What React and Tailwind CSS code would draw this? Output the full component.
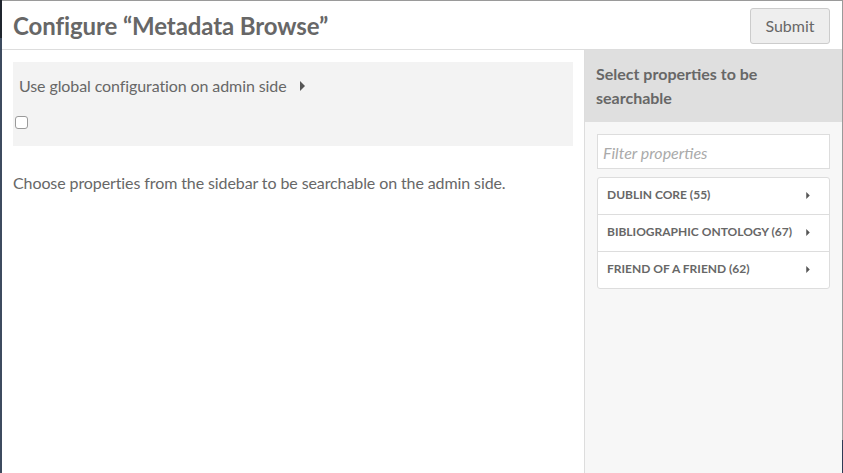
import React from 'react';

const Caret = ({ className }) => (
  <svg className={className} viewBox="0 0 5 10" fill="currentColor">
    <path d="M0 0L5 5L0 10Z" />
  </svg>
);

const vocabularies = [
  'Dublin Core (55)',
  'Bibliographic Ontology (67)',
  'Friend of a Friend (62)',
];

export default function App() {
  return (
    <div className="flex h-[473px] w-[843px] overflow-hidden bg-white font-['Lato','Open_Sans',sans-serif] text-[#676767]">
      {/* strip of the page behind */}
      <div className="flex w-[2px] flex-col">
        <div className="h-[38px] bg-[#1f252e]" />
        <div className="flex-1 bg-[#3d4b5f]" />
      </div>

      <div className="flex min-w-0 flex-1 flex-col border-t border-[#9a9a9a]">
        {/* Header */}
        <div className="flex h-[49px] shrink-0 items-center justify-between border-b border-[#dddddd] pl-[11px] pr-[12px]">
          <h1 className="mt-[2px] text-[24px] font-bold leading-none tracking-[-0.1px]">Configure “Metadata Browse”</h1>
          <button className="mt-[1px] h-[36px] w-[80px] rounded-[3px] border border-[#cccccc] bg-[#eeeeee] text-[16px] text-[#676767]">
            Submit
          </button>
        </div>

        <div className="flex flex-1">
          {/* Main */}
          <div className="w-[582px] shrink-0 px-[11px] pt-[12px] tracking-[-0.1px]">
            <div className="bg-[#f3f3f3] px-[6px] pb-[17px] pt-[12px]">
              <div className="flex h-[24px] items-center text-[16px] leading-6">
                <span>Use global configuration on admin side</span>
                <Caret className="ml-[13px] h-[10px] w-[5px] text-[#555555]" />
              </div>
              <input
                type="checkbox"
                className="-ml-[4px] mt-[18px] block h-[13px] w-[13px] appearance-none rounded-[3px] border border-[#9a9a9a] bg-white"
              />
            </div>
            <p className="mt-[25px] text-[16px] leading-6">
              Choose properties from the sidebar to be searchable on the admin side.
            </p>
          </div>

          {/* Sidebar */}
          <div className="flex flex-1 flex-col border-l border-[#dddddd] bg-[#f7f7f7]">
            <div className="bg-[#dfdfdf] px-[11px] pb-[12px] pt-[12px] text-[16px] font-bold leading-6">
              Select properties to be searchable
            </div>
            <div className="px-[12px] pt-[12px]">
              <input
                type="text"
                placeholder="Filter properties"
                className="block h-[35px] w-full border border-[#dddddd] bg-white px-[5px] pt-[1px] text-[16px] outline-none placeholder:italic placeholder:text-[#aaaaaa]"
              />
              <ul className="mt-[8px] rounded-[3px] border border-[#dddddd] bg-white">
                {vocabularies.map((v, i) => (
                  <li
                    key={v}
                    className={`flex items-center justify-between pb-[3px] pl-[9px] pr-[19px] text-[12px] font-bold uppercase ${
                      i > 0 ? 'h-[37px] border-t border-[#dddddd]' : 'h-[36px]'
                    }`}
                  >
                    <span>{v}</span>
                    <Caret className="mt-[2px] h-[7px] w-[4px] text-[#555555]" />
                  </li>
                ))}
              </ul>
            </div>
          </div>
        </div>
      </div>

      {/* right edge */}
      <div className="flex w-[1px] flex-col">
        <div className="flex-1 bg-[#9a9a9a]" />
        <div className="h-[33px] bg-[#2f3b55]" />
      </div>
    </div>
  );
}
